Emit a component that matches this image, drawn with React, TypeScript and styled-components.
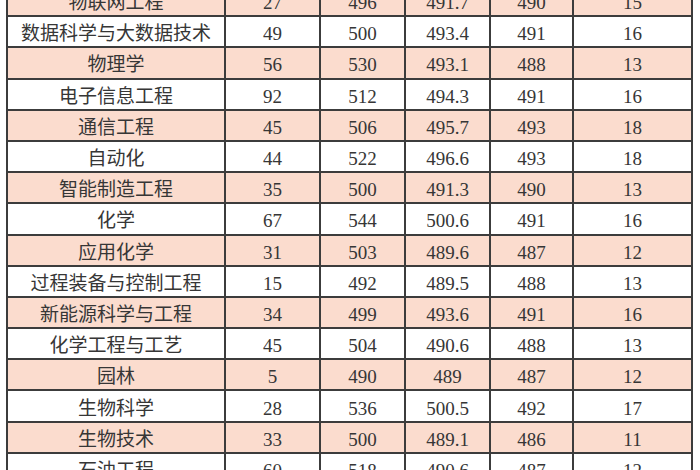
import styled, { createGlobalStyle } from "styled-components";

const GlobalStyle = createGlobalStyle`
  html, body {
    margin: 0;
    padding: 0;
    background: #ffffff;
  }
  body {
    width: 700px;
    height: 470px;
    overflow: hidden;
  }
`;

type Row = [string, string, string, string, string, string];

const rows: Row[] = [
  ["物联网工程", "27", "496", "491.7", "490", "15"],
  ["数据科学与大数据技术", "49", "500", "493.4", "491", "16"],
  ["物理学", "56", "530", "493.1", "488", "13"],
  ["电子信息工程", "92", "512", "494.3", "491", "16"],
  ["通信工程", "45", "506", "495.7", "493", "18"],
  ["自动化", "44", "522", "496.6", "493", "18"],
  ["智能制造工程", "35", "500", "491.3", "490", "13"],
  ["化学", "67", "544", "500.6", "491", "16"],
  ["应用化学", "31", "503", "489.6", "487", "12"],
  ["过程装备与控制工程", "15", "492", "489.5", "488", "13"],
  ["新能源科学与工程", "34", "499", "493.6", "491", "16"],
  ["化学工程与工艺", "45", "504", "490.6", "488", "13"],
  ["园林", "5", "490", "489", "487", "12"],
  ["生物科学", "28", "536", "500.5", "492", "17"],
  ["生物技术", "33", "500", "489.1", "486", "11"],
  ["石油工程", "60", "518", "490.6", "487", "12"],
];

const colWidths = [218, 95, 85, 85, 83, 119];

const Page = styled.div`
  width: 700px;
  height: 470px;
  overflow: hidden;
  padding-left: 6px;
  box-sizing: border-box;
`;

const Table = styled.table`
  margin-top: -16px;
  width: 687px;
  table-layout: fixed;
  border-collapse: collapse;
  font-family: "Liberation Serif", "Noto Sans CJK SC", serif;
  font-size: 19px;
  color: #363636;
`;

const Tr = styled.tr<{ $tinted: boolean }>`
  height: 31.2px;
  background: ${(p) => (p.$tinted ? "#fbdcce" : "#ffffff")};
`;

const Td = styled.td`
  border: 2px solid #3c3c3c;
  padding: 4px 0 0;
  text-align: center;
  vertical-align: middle;
  white-space: nowrap;
  line-height: 1;
`;

const App = () => {
  return (
    <>
      <GlobalStyle />
      <Page>
        <Table>
          <colgroup>
            {colWidths.map((w, i) => (
              <col key={i} style={{ width: w }} />
            ))}
          </colgroup>
          <tbody>
            {rows.map((r, i) => (
              <Tr key={r[0]} $tinted={i % 2 === 0}>
                {r.map((c, j) => (
                  <Td key={j}>{c}</Td>
                ))}
              </Tr>
            ))}
          </tbody>
        </Table>
      </Page>
    </>
  );
};

export default App;
